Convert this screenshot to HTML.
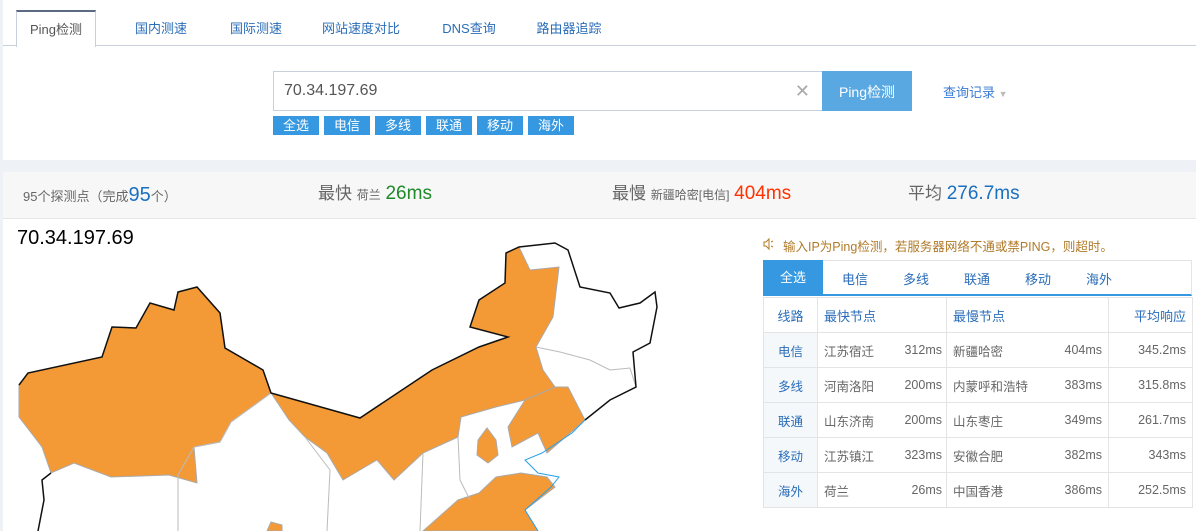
<!DOCTYPE html>
<html><head><meta charset="utf-8"><style>
*{margin:0;padding:0;box-sizing:border-box}
body{width:1196px;height:531px;overflow:hidden;background:#eef2f7;font-family:"Liberation Sans","Noto Sans CJK SC",sans-serif;position:relative}
.abs{position:absolute}
.card{left:3px;top:0;width:1193px;height:160px;background:#fff}
.tab{top:10px;height:36px;line-height:38px;font-size:13px;color:#2a6db8;text-align:center}
.btn{top:116px;width:46px;height:19px;background:#3598e0;color:#fff;font-size:13px;line-height:19px;text-align:center}
.stats{left:3px;top:172px;width:1193px;height:47px;background:#f7f7f7;border-bottom:1px solid #e6e6e6}
.main{left:3px;top:219px;width:1193px;height:312px;background:#fff}
table{border-collapse:collapse;font-size:12.5px;table-layout:fixed}
td{border:1px solid #e4e4e4;height:35px;color:#666;padding:0 6px;white-space:nowrap;overflow:hidden}
td.l{background:#f5f8fb;color:#2a6db8;text-align:center}
</style></head><body>
<div class="abs card"></div>
<div class="abs" style="left:3px;top:45px;width:1193px;height:1px;background:#c8d0dc"></div>
<div class="abs tab" style="left:16px;width:80px;background:#fff;border:1px solid #c8d0dc;border-bottom:none;border-top:2px solid #5a6a80;color:#555;height:37px;line-height:35px">Ping检测</div>
<div class="abs tab" style="left:125px;width:72px">国内测速</div>
<div class="abs tab" style="left:220px;width:72px">国际测速</div>
<div class="abs tab" style="left:312px;width:98px">网站速度对比</div>
<div class="abs tab" style="left:432px;width:74px">DNS查询</div>
<div class="abs tab" style="left:528px;width:82px">路由器追踪</div>
<div class="abs" style="left:273px;top:71px;width:550px;height:40px;border:1px solid #c8d0dc;font-size:16px;color:#555;line-height:38px;padding-left:10px">70.34.197.69<span style="position:absolute;right:12px;top:0;color:#aaa;font-size:18px">✕</span></div>
<div class="abs" style="left:822px;top:71px;width:90px;height:40px;background:#59a8e2;color:#fff;font-size:14px;line-height:42px;text-align:center">Ping检测</div>
<div class="abs" style="left:943px;top:82px;font-size:13px;color:#3a7bd5">查询记录 <span style="color:#bbb;font-size:9px">▼</span></div>
<div class="abs btn" style="left:273px">全选</div><div class="abs btn" style="left:324px">电信</div><div class="abs btn" style="left:375px">多线</div><div class="abs btn" style="left:426px">联通</div><div class="abs btn" style="left:477px">移动</div><div class="abs btn" style="left:528px">海外</div>
<div class="abs stats"></div>
<div class="abs" style="left:23px;top:184px;font-size:13px;color:#666;line-height:22px">95个探测点（完成<span style="font-size:20px;color:#1a6fc0">95</span>个）</div>
<div class="abs" style="left:318px;top:182px;font-size:17px;color:#666;line-height:24px">最快 <span style="font-size:12px">荷兰</span> <span style="font-size:19px;color:#1f8a2a">26ms</span></div>
<div class="abs" style="left:612px;top:182px;font-size:17px;color:#666;line-height:24px">最慢 <span style="font-size:12px">新疆哈密[电信]</span> <span style="font-size:19px;color:#ff3300">404ms</span></div>
<div class="abs" style="left:908px;top:182px;font-size:17px;color:#666;line-height:24px">平均 <span style="font-size:19px;color:#1a6fc0">276.7ms</span></div>
<div class="abs main"></div>
<div class="abs" style="left:17px;top:227px;font-size:20px;color:#000">70.34.197.69</div>
<svg class="abs" style="left:0;top:219px" width="700" height="312" viewBox="0 219 700 312">
<g fill="#f39a36" stroke="#aaa" stroke-width="1">
<path d="M19,385 L28,373 L102,357 L112,327 L136,328 L150,303 L174,310 L178,292 L197,287 L220,313 L225,348 L263,370 L271,393 L231,422 L220,442 L194,447 L197,483 L169,475 L111,477 L74,463 L51,473 L42,447 L19,417Z"/>
<path d="M271,393 L360,418 L432,370 L479,347 L508,337 L470,327 L479,300 L505,283 L506,253 L519,247 L530,270 L559,267 L553,317 L536,347 L543,370 L555,387 L525,400 L496,407 L461,417 L458,437 L423,453 L394,480 L377,460 L365,467 L343,480 L327,453 L305,437 L289,420Z"/>
<path d="M555,387 L568,387 L585,420 L547,453 L538,433 L512,447 L508,427 L525,400Z"/>
<path d="M478,440 L487,428 L496,440 L498,455 L488,463 L477,455Z"/>
<path d="M479,493 L496,477 L521,473 L547,477 L555,487 L525,510 L538,531 L423,531 L458,500Z"/>
<path d="M267,531 L271,522 L282,525 L282,531Z"/>
</g>
<g fill="none" stroke="#bbb" stroke-width="1">
<path d="M271,393 L231,422 L220,442 L194,447 L178,475 L178,531"/>
<path d="M305,437 L330,470 L327,531"/>
<path d="M423,453 L420,531"/>
<path d="M536,347 L560,352 L590,360 L610,370 L630,368 L636,387"/>
<path d="M458,437 L460,480 L470,500"/>
</g>
<g fill="none" stroke="#111" stroke-width="1.5">
<path d="M19,385 L28,373 L102,357 L112,327 L136,328 L150,303 L174,310 L178,292 L197,287 L220,313 L225,348 L263,370 L271,393 L360,418 L432,370 L479,347 L508,337 L470,327 L479,300 L505,283 L506,253 L519,247 L555,243 L568,250 L580,287 L610,293 L619,308 L640,303 L655,292 L657,307 L650,343 L633,352 L636,387 L610,400 L585,420"/>
<path d="M51,473 L42,480 L44,500 L38,531"/>
</g>
<g fill="none" stroke="#2aa0e8" stroke-width="1"><path d="M585,420 L572,433 L542,453 L525,460 L538,473 L559,477 L551,487 L525,510 L538,531"/></g>
</svg>
<svg class="abs" style="left:762px;top:237px" width="14" height="14" viewBox="0 0 14 14"><path d="M2,5 H4 L7,2 V12 L4,9 H2Z" fill="none" stroke="#b07a2a"/><path d="M9,5 L11,4 M9,9 L11,10" stroke="#b07a2a"/></svg>
<div class="abs" style="left:783px;top:236px;font-size:12.5px;color:#b07a2a">输入IP为Ping检测，若服务器网络不通或禁PING，则超时。</div>
<div class="abs" style="left:763px;top:260px;width:429px;height:36px;border:1px solid #e4e4e4;border-bottom:2px solid #3598e0;background:#fff"></div>
<div class="abs" style="left:763px;top:260px;width:60px;height:36px;background:#3598e0;color:#fff;font-size:13px;line-height:36px;text-align:center">全选</div>
<div class="abs" style="left:842px;top:269px;font-size:13px;color:#2a6db8">电信</div>
<div class="abs" style="left:903px;top:269px;font-size:13px;color:#2a6db8">多线</div>
<div class="abs" style="left:964px;top:269px;font-size:13px;color:#2a6db8">联通</div>
<div class="abs" style="left:1025px;top:269px;font-size:13px;color:#2a6db8">移动</div>
<div class="abs" style="left:1086px;top:269px;font-size:13px;color:#2a6db8">海外</div>
<table class="abs" style="left:763px;top:297px;width:429px">
<colgroup><col style="width:54px"><col style="width:84px"><col style="width:45px"><col style="width:110px"><col style="width:52px"><col style="width:84px"></colgroup>
<tr><td class="l" style="background:#fff;font-size:13px">线路</td><td colspan="2" style="color:#2a6db8;font-size:13px">最快节点</td><td colspan="2" style="color:#2a6db8;font-size:13px">最慢节点</td><td style="color:#2a6db8;text-align:right;font-size:13px">平均响应</td></tr>
<tr><td class="l">电信</td><td style="border-right:none">江苏宿迁</td><td style="border-left:none;text-align:right;padding:0 4px 0 0">312ms</td><td style="border-right:none">新疆哈密</td><td style="border-left:none;text-align:right">404ms</td><td style="text-align:right">345.2ms</td></tr>
<tr><td class="l">多线</td><td style="border-right:none">河南洛阳</td><td style="border-left:none;text-align:right;padding:0 4px 0 0">200ms</td><td style="border-right:none">内蒙呼和浩特</td><td style="border-left:none;text-align:right">383ms</td><td style="text-align:right">315.8ms</td></tr>
<tr><td class="l">联通</td><td style="border-right:none">山东济南</td><td style="border-left:none;text-align:right;padding:0 4px 0 0">200ms</td><td style="border-right:none">山东枣庄</td><td style="border-left:none;text-align:right">349ms</td><td style="text-align:right">261.7ms</td></tr>
<tr><td class="l">移动</td><td style="border-right:none">江苏镇江</td><td style="border-left:none;text-align:right;padding:0 4px 0 0">323ms</td><td style="border-right:none">安徽合肥</td><td style="border-left:none;text-align:right">382ms</td><td style="text-align:right">343ms</td></tr>
<tr><td class="l">海外</td><td style="border-right:none">荷兰</td><td style="border-left:none;text-align:right;padding:0 4px 0 0">26ms</td><td style="border-right:none">中国香港</td><td style="border-left:none;text-align:right">386ms</td><td style="text-align:right">252.5ms</td></tr>
</table>
</body></html>
